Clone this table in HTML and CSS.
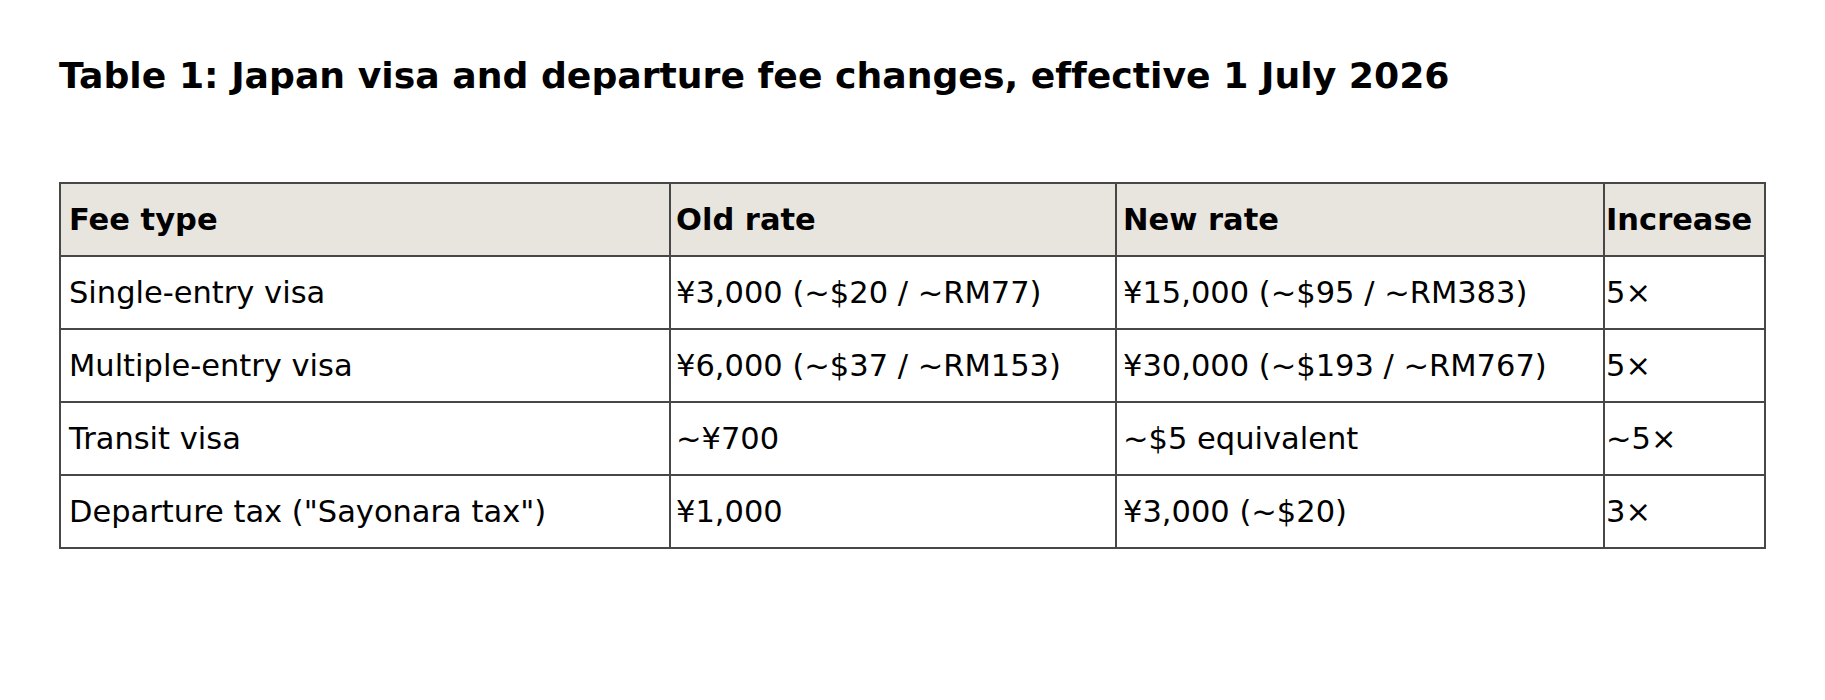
FILE: index.html
```html
<!DOCTYPE html>
<html>
<head>
<meta charset="utf-8">
<link rel="stylesheet" href="styles.css">
</head>
<body>
<div class="page">
  <h1 class="title">Table 1: Japan visa and departure fee changes, effective 1 July 2026</h1>
  <table class="fees">
    <colgroup>
      <col class="c1"><col class="c2"><col class="c3"><col class="c4">
    </colgroup>
    <thead>
      <tr>
        <th class="p1">Fee type</th>
        <th class="p2">Old rate</th>
        <th class="p3">New rate</th>
        <th class="p4">Increase</th>
      </tr>
    </thead>
    <tbody>
      <tr>
        <td class="p1">Single-entry visa</td>
        <td class="p2">¥3,000 (~$20 / ~RM77)</td>
        <td class="p3">¥15,000 (~$95 / ~RM383)</td>
        <td class="p4">5×</td>
      </tr>
      <tr>
        <td class="p1">Multiple-entry visa</td>
        <td class="p2">¥6,000 (~$37 / ~RM153)</td>
        <td class="p3">¥30,000 (~$193 / ~RM767)</td>
        <td class="p4">5×</td>
      </tr>
      <tr>
        <td class="p1">Transit visa</td>
        <td class="p2">~¥700</td>
        <td class="p3">~$5 equivalent</td>
        <td class="p4">~5×</td>
      </tr>
      <tr>
        <td class="p1">Departure tax ("Sayonara tax")</td>
        <td class="p2">¥1,000</td>
        <td class="p3">¥3,000 (~$20)</td>
        <td class="p4">3×</td>
      </tr>
    </tbody>
  </table>
</div>
</body>
</html>
```
FILE: styles.css
```css
html, body {
  margin: 0;
  padding: 0;
  background: #ffffff;
}
body {
  font-family: "DejaVu Sans", "Liberation Sans", sans-serif;
  color: #000000;
  font-variant-ligatures: none;
}
.page {
  padding: 55px 0 0 59px;
}
.title {
  margin: 0;
  font-size: 36.2px;
  font-weight: bold;
  line-height: 42px;
}
.fees {
  margin-top: 85px;
  border-collapse: collapse;
  table-layout: fixed;
  width: 1705px;
}
.c1 { width: 610px; }
.c2 { width: 446px; }
.c3 { width: 488px; }
.c4 { width: 161px; }
.fees th, .fees td {
  border: 2px solid #474747;
  font-size: 30.5px;
  line-height: 36px;
  height: 71px;
  padding-top: 0;
  padding-bottom: 0;
  text-align: left;
  vertical-align: middle;
  white-space: nowrap;
  overflow: visible;
}
.fees th {
  background: #e8e5df;
  font-weight: bold;
}
.p1 { padding-left: 8px; }
.p2 { padding-left: 5px; }
.p3 { padding-left: 6px; }
.p4 { padding-left: 1px; padding-right: 0; }
```
